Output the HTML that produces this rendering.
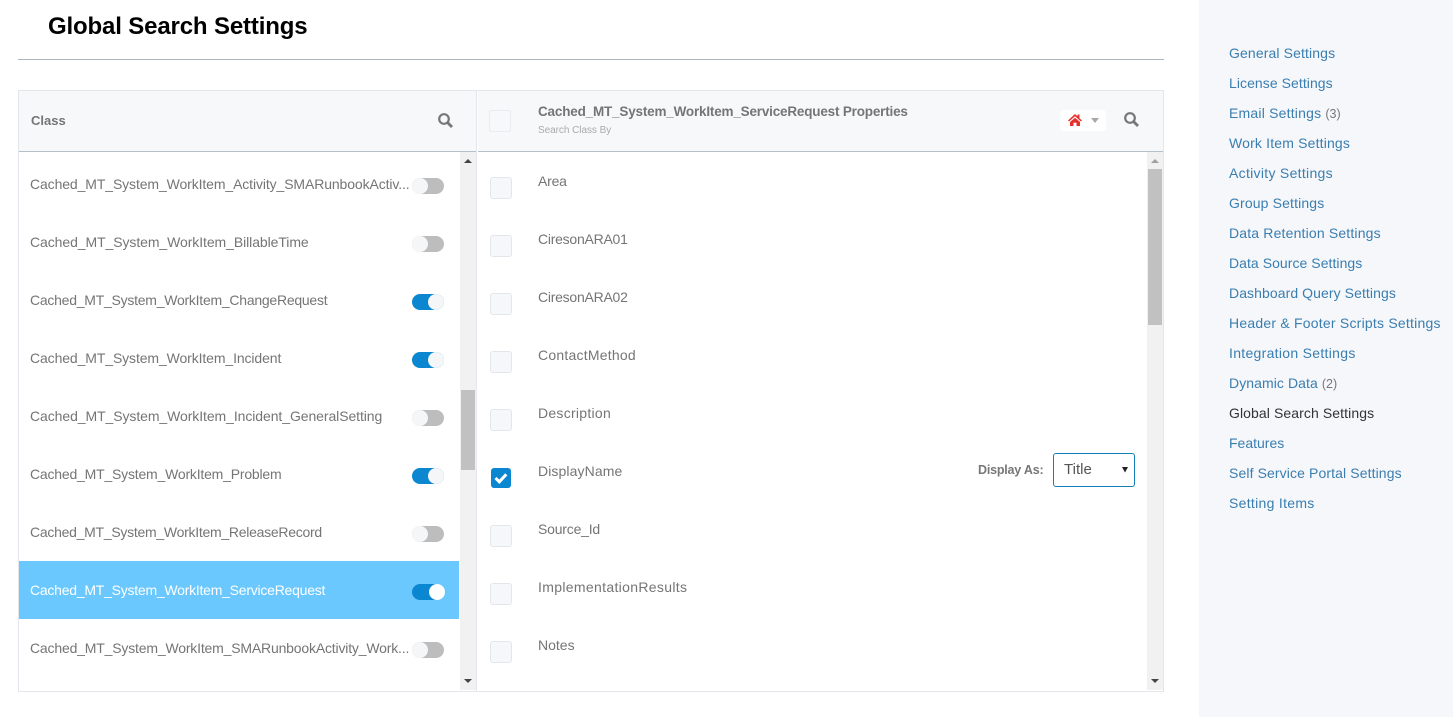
<!DOCTYPE html>
<html><head><meta charset="utf-8"><title>Global Search Settings</title>
<style>
html,body{margin:0;padding:0;background:#fff;}
body{width:1453px;height:717px;position:relative;overflow:hidden;font-family:"Liberation Sans",sans-serif;font-size:14px;color:#777;}
div,span,a,h1{position:absolute;white-space:nowrap;}
span.n{position:static;}
h1{left:48px;top:11px;margin:0;font-size:24px;letter-spacing:-.15px;line-height:32px;font-weight:bold;color:#000;}
.hr{left:18px;top:59px;width:1146px;height:1px;background:#a9b6bf;}
.side{left:1199px;top:0;width:254px;height:717px;background:#f5f7fa;}
.l{left:1229px;font-size:14px;line-height:20px;color:#3a7eb0;}
.l .n{color:#777;font-size:12.5px;letter-spacing:0;}
.box{left:18px;top:90px;width:1144px;height:600px;border:1px solid #e3e7ec;}
.h1b{left:19px;top:91px;width:457px;height:60px;background:#f6f8fa;border-bottom:1px solid #b4c0c9;}
.h2b{left:478px;top:91px;width:685px;height:60px;background:#f6f8fa;border-bottom:1px solid #b4c0c9;}
.vd{left:476px;top:91px;width:1px;height:600px;background:#e3e7ec;}
.sb{background:#f1f1f1;}
.th{background:#c1c1c1;}
.t{left:30px;line-height:20px;color:#757575;}
.p{left:538px;line-height:20px;color:#757575;}
.tg{left:412px;width:32px;height:16px;border-radius:8px;background:#bdbdbd;}
.tg i{position:absolute;left:0;top:0;width:16px;height:16px;border-radius:50%;background:#f4f6f8;}
.tg.on{background:#0b87d1;}
.tg.on i{left:16px;}
.cb{left:490px;width:20px;height:20px;background:#f5f7fa;border:1px solid #e3e7ec;border-radius:3px;}
.sel{left:19px;top:561px;width:440px;height:58px;background:#6ac8fe;}
</style></head><body>
<h1>Global Search Settings</h1>
<div class="hr"></div>
<div class="side"></div>
<a class="l" style="top:43px;letter-spacing:.12px">General Settings</a>
<a class="l" style="top:73px;letter-spacing:.06px">License Settings</a>
<a class="l" style="top:103px;letter-spacing:.2px">Email Settings <span class="n">(3)</span></a>
<a class="l" style="top:133px;letter-spacing:.17px">Work Item Settings</a>
<a class="l" style="top:163px;letter-spacing:.3px">Activity Settings</a>
<a class="l" style="top:193px;letter-spacing:.14px">Group Settings</a>
<a class="l" style="top:223px;letter-spacing:.17px">Data Retention Settings</a>
<a class="l" style="top:253px;letter-spacing:.05px">Data Source Settings</a>
<a class="l" style="top:283px;letter-spacing:.08px">Dashboard Query Settings</a>
<a class="l" style="top:313px;letter-spacing:.22px">Header &amp; Footer Scripts Settings</a>
<a class="l" style="top:343px;letter-spacing:.3px">Integration Settings</a>
<a class="l" style="top:373px;letter-spacing:.08px">Dynamic Data <span class="n">(2)</span></a>
<a class="l" style="top:403px;color:#333;letter-spacing:.09px">Global Search Settings</a>
<a class="l" style="top:433px">Features</a>
<a class="l" style="top:463px;letter-spacing:.11px">Self Service Portal Settings</a>
<a class="l" style="top:493px;letter-spacing:.3px">Setting Items</a>

<div class="box"></div>
<div class="h1b"></div>
<div class="h2b"></div>
<div class="vd"></div>
<div class="sb" style="left:460px;top:152px;width:16px;height:538px"></div>
<div class="th" style="left:461px;top:390px;width:14px;height:80px"></div>
<div class="sb" style="left:1147px;top:152px;width:16px;height:538px"></div>
<div class="th" style="left:1148px;top:169px;width:14px;height:156px"></div>
<svg style="position:absolute;left:0;top:0" width="1453" height="717">
<path d="M464 163l4-4 4 4zM464 679l4 4 4-4zM1151 679l4 4 4-4z" fill="#444"/>
<path d="M1151 163l4-4 4 4z" fill="#a0a0a0"/>
<g fill="none" stroke="#777"><circle cx="444" cy="119" r="4.800" stroke-width="2.200"/><path d="M447.500 122.500l4.500 4.500" stroke-width="2.800"/><circle cx="1130" cy="118" r="4.800" stroke-width="2.200"/><path d="M1133.500 121.500l4.500 4.500" stroke-width="2.800"/></g>
</svg>
<div style="left:1060px;top:110px;width:46px;height:21px;background:#fff;border-radius:3px"></div>
<svg style="position:absolute;left:1060px;top:110px" width="46" height="21"><path d="M15 4L8 10.500l1 1 6-5.200 6 5.200 1-1-2.500-2.300V4.500h-2v1.800zM10 12l5-4.300 5 4.300v4h-3.500v-3.200h-3V16H10z" fill="#e5322d"/><path d="M31 8h8l-4 5z" fill="#a4a9ad"/></svg>

<div style="left:31px;top:111px;font-size:13px;font-weight:bold;line-height:20px;color:#757575">Class</div>
<div style="left:489px;top:110px;width:20px;height:20px;border:1px solid #e9ecef;border-radius:2px;background:#f6f8fa"></div>
<div style="left:538px;top:102px;font-size:13.500px;letter-spacing:-.19px;font-weight:bold;line-height:20px;color:#757575">Cached_MT_System_WorkItem_ServiceRequest Properties</div>
<div style="left:538px;top:124px;font-size:10px;letter-spacing:-.05px;line-height:14px;color:#aaa">Search Class By</div>

<div class="sel"></div>
<div class="t" style="top:174px;letter-spacing:-.11px">Cached_MT_System_WorkItem_Activity_SMARunbookActiv...</div>
<div class="t" style="top:232px;letter-spacing:-.08px">Cached_MT_System_WorkItem_BillableTime</div>
<div class="t" style="top:290px;letter-spacing:-.25px">Cached_MT_System_WorkItem_ChangeRequest</div>
<div class="t" style="top:348px;letter-spacing:-.11px">Cached_MT_System_WorkItem_Incident</div>
<div class="t" style="top:406px;letter-spacing:-.08px">Cached_MT_System_WorkItem_Incident_GeneralSetting</div>
<div class="t" style="top:464px;letter-spacing:-.2px">Cached_MT_System_WorkItem_Problem</div>
<div class="t" style="top:522px;letter-spacing:-.27px">Cached_MT_System_WorkItem_ReleaseRecord</div>
<div class="t" style="top:580px;color:#fff;letter-spacing:-.24px">Cached_MT_System_WorkItem_ServiceRequest</div>
<div class="t" style="top:638px;letter-spacing:-.18px">Cached_MT_System_WorkItem_SMARunbookActivity_Work...</div>

<div class="tg" style="top:178px"><i></i></div>
<div class="tg" style="top:236px"><i></i></div>
<div class="tg on" style="top:294px"><i></i></div>
<div class="tg on" style="top:352px"><i></i></div>
<div class="tg" style="top:410px"><i></i></div>
<div class="tg on" style="top:468px"><i></i></div>
<div class="tg" style="top:526px"><i></i></div>
<div class="tg on" style="top:584px"><i style="background:#fff;left:17px"></i></div>
<div class="tg" style="top:642px"><i></i></div>

<div class="cb" style="top:177px"></div><div class="p" style="top:171px;letter-spacing:-.2px">Area</div>
<div class="cb" style="top:235px"></div><div class="p" style="top:229px;letter-spacing:-.25px">CiresonARA01</div>
<div class="cb" style="top:293px"></div><div class="p" style="top:287px;letter-spacing:-.25px">CiresonARA02</div>
<div class="cb" style="top:351px"></div><div class="p" style="top:345px;letter-spacing:.23px">ContactMethod</div>
<div class="cb" style="top:409px"></div><div class="p" style="top:403px;letter-spacing:.27px">Description</div>
<div class="cb" style="left:491px;top:468px;width:20px;height:20px;border:0;background:#0b87d1"></div>
<svg style="position:absolute;left:491px;top:468px" width="20" height="20"><path d="M4.500 10l3.800 3.800 7-7.500" fill="none" stroke="#fff" stroke-width="3"/></svg>
<div class="p" style="top:461px;letter-spacing:.1px">DisplayName</div>
<div class="cb" style="top:525px"></div><div class="p" style="top:519px;letter-spacing:-.2px">Source_Id</div>
<div class="cb" style="top:583px"></div><div class="p" style="top:577px;letter-spacing:.33px">ImplementationResults</div>
<div class="cb" style="top:641px"></div><div class="p" style="top:635px">Notes</div>

<div style="left:978px;top:461px;font-size:12.500px;letter-spacing:-.2px;font-weight:bold;line-height:18px;color:#777">Display As:</div>
<div style="left:1053px;top:453px;width:80px;height:32px;border:1px solid #1580b8;border-radius:3px;background:#fff"></div>
<div style="left:1064px;top:460px;font-size:15px;line-height:20px;color:#555">Title</div>
<svg style="position:absolute;left:1122px;top:467px" width="7" height="6"><path d="M0 0h6l-3 5.500z" fill="#222"/></svg>
</body></html>
